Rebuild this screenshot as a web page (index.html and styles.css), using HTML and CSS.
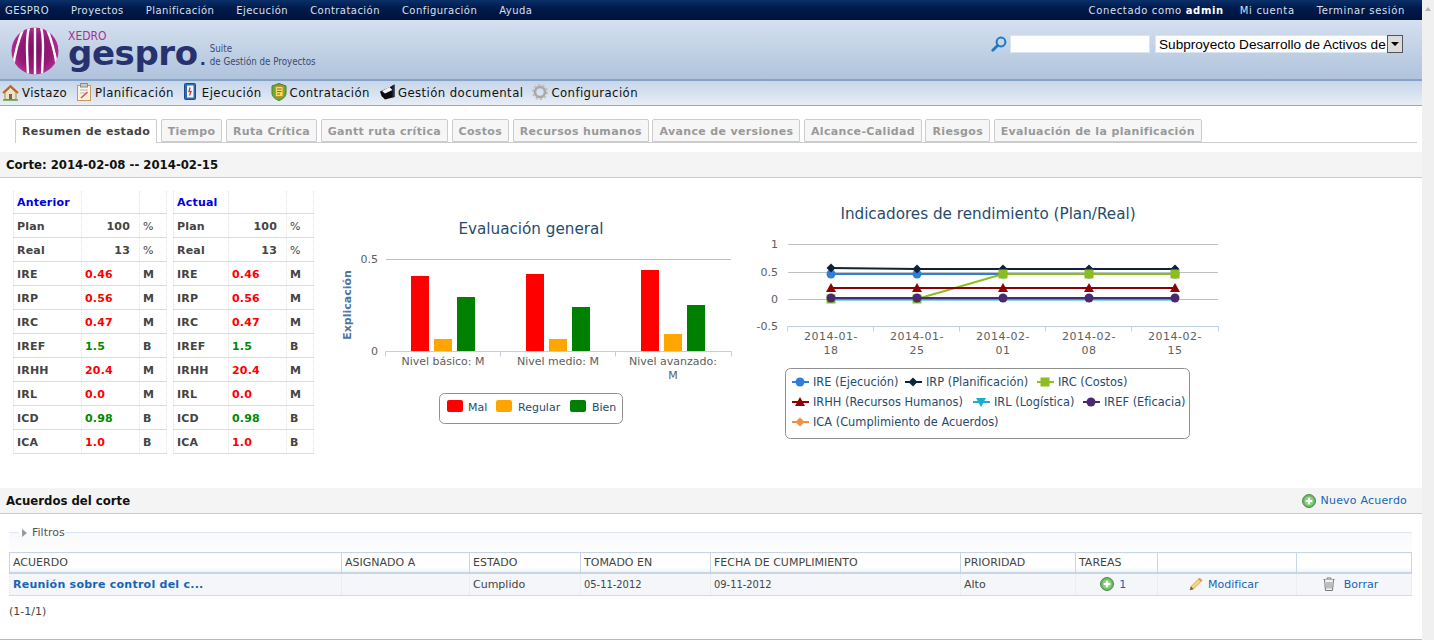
FILE: index.html
```html
<!DOCTYPE html>
<html lang="es">
<head>
    <meta charset="UTF-8">
    <meta name="viewport" content="width=device-width, initial-scale=1.0">
    <title>Gespro - Resumen de estado</title>
    <link rel="stylesheet" href="styles.css">
</head>
<body>
    <svg class="defs" width="0" height="0">
        <defs>
            <g id="ico-add">
                <circle cx="7" cy="7" r="6.5" fill="#6cb563" stroke="#4c9146"/>
                <circle cx="7" cy="7" r="4.6" fill="#8fd086"/>
                <path d="M7 3.8v6.4M3.8 7h6.4" stroke="#fff" stroke-width="2.2"/>
            </g>
            <g id="m-circle"><circle r="4.5" fill="#2f7ed8"/></g>
            <g id="m-diamond"><path d="M0 -4.5L4.5 0L0 4.5L-4.5 0Z" fill="#0d233a"/></g>
            <g id="m-square"><rect x="-4.5" y="-4.5" width="9" height="9" fill="#8bbc21"/></g>
            <g id="m-triangle"><path d="M0 -5L5 4H-5Z" fill="#910000"/></g>
            <g id="m-triangle-down"><path d="M-5 -4H5L0 5Z" fill="#1aadce"/></g>
            <g id="m-circle-purple"><circle r="4.5" fill="#492970"/></g>
            <g id="m-diamond-orange"><path d="M0 -4.5L4.5 0L0 4.5L-4.5 0Z" fill="#f28f43"/></g>
        </defs>
    </svg>

    <div class="page">
        <div class="topbar">
            <ul class="topbar-menu">
                <li class="first">GESPRO</li>
                <li>Proyectos</li>
                <li>Planificación</li>
                <li>Ejecución</li>
                <li>Contratación</li>
                <li>Configuración</li>
                <li>Ayuda</li>
            </ul>
            <ul class="topbar-user">
                <li class="who">Conectado como <b>admin</b></li>
                <li>Mi cuenta</li>
                <li>Terminar sesión</li>
            </ul>
        </div>

        <div class="header">
            <div class="logo">
                <svg class="logo-mark" width="48" height="48" viewBox="0 0 48 48">
                    <defs>
                        <radialGradient id="logoFill" cx="0.5" cy="0.5" r="0.6">
                            <stop offset="0" stop-color="#7d0f63"/>
                            <stop offset="0.6" stop-color="#961a78"/>
                            <stop offset="1" stop-color="#c43aa0"/>
                        </radialGradient>
                        <clipPath id="logoClip"><circle cx="24" cy="24" r="23.5"/></clipPath>
                    </defs>
                    <circle cx="24" cy="24" r="23.5" fill="url(#logoFill)"/>
                    <g clip-path="url(#logoClip)" fill="none" stroke="#fff" stroke-width="2.4">
                        <path d="M24 0V48"/>
                        <path d="M18 0C15 12 16 26 17 48"/>
                        <path d="M30 0C33 12 32 26 31 48"/>
                        <path d="M12 2C7 14 4 26 2 40"/>
                        <path d="M36 2C41 14 44 26 46 40"/>
                    </g>
                </svg>
                <div class="logo-name">
                    <span class="logo-xedro">XEDRO</span>
                    <span class="logo-gespro">gespro<i>.</i></span>
                </div>
                <div class="logo-suite">Suite<br>de Gestión de Proyectos</div>
            </div>
            <div class="search">
                <svg width="16" height="16" viewBox="0 0 16 16">
                    <circle cx="10" cy="6" r="4.4" fill="none" stroke="#1d77c4" stroke-width="2"/>
                    <path d="M6.6 9.4L1.8 14.2" stroke="#1d77c4" stroke-width="2.8" stroke-linecap="round"/>
                </svg>
                <input class="search-box" type="text">
                <div class="project-select">
                    <select>
                        <option>Subproyecto Desarrollo de Activos de Información</option>
                    </select>
                    <span class="select-btn"></span>
                </div>
            </div>
        </div>

        <div class="nav">
            <a class="nav-item">
                <svg width="17" height="17" viewBox="0 0 17 17">
                    <path d="M3 8.5V15.5H14V8.5L8.5 3.5Z" fill="#f1e3c0" stroke="#a98a55"/>
                    <path d="M1 9L8.5 2L16 9" fill="none" stroke="#b8662a" stroke-width="2"/>
                    <rect x="7" y="10" width="3" height="5.5" fill="#6d6a5c"/>
                    <path d="M1 16H16" stroke="#58a04a" stroke-width="1.5"/>
                </svg>
                Vistazo
            </a>
            <a class="nav-item">
                <svg width="16" height="18" viewBox="0 0 16 18">
                    <rect x="1.5" y="2.5" width="13" height="15" fill="#fbf3df" stroke="#c69a5c"/>
                    <rect x="4.5" y="0.5" width="7" height="3.5" fill="#c9c9c9" stroke="#8c8c8c"/>
                    <path d="M4 7H12M4 10H9" stroke="#b9b9b9"/>
                    <path d="M5 15L11.5 9" stroke="#d9534a" stroke-width="1.6"/>
                </svg>
                Planificación
            </a>
            <a class="nav-item">
                <svg width="16" height="18" viewBox="0 0 16 18">
                    <rect x="1.5" y="0.5" width="11" height="16" rx="1" fill="#2d6db5" stroke="#1c4b86"/>
                    <rect x="4" y="2.5" width="6.5" height="12" fill="#f2f6fb"/>
                    <path d="M7 4.5L6 8.5H8L6.5 12.5" fill="none" stroke="#c43a3a" stroke-width="1.3"/>
                </svg>
                Ejecución
            </a>
            <a class="nav-item">
                <svg width="16" height="18" viewBox="0 0 16 18">
                    <path d="M1 3L8 0.5L15 3V10C15 14 11 16.5 8 17.5C5 16.5 1 14 1 10Z" fill="#71a83c" stroke="#4d7d27"/>
                    <rect x="4.5" y="3.5" width="7.5" height="10" fill="#f6dd5e" stroke="#b29a2d"/>
                    <path d="M6 6H10.5M6 8.5H10.5M6 11H9" stroke="#a05c2c"/>
                </svg>
                Contratación
            </a>
            <a class="nav-item">
                <svg width="16" height="16" viewBox="0 0 16 16">
                    <path d="M1 7.5L11 3L15.5 0.5V13L6 15.5L2.5 12Z" fill="#0c0c10"/>
                    <path d="M3 7L10.5 3L13.5 6L6 9.5Z" fill="#eef2f6"/>
                    <path d="M13.5 1.5L15.5 0.5V13L13.5 13.5Z" fill="#24304a"/>
                </svg>
                Gestión documental
            </a>
            <a class="nav-item">
                <svg width="16" height="16" viewBox="0 0 16 16">
                    <circle cx="8" cy="8" r="5" fill="none" stroke="#a9a9a9" stroke-width="2.6"/>
                    <circle cx="8" cy="8" r="7" fill="none" stroke="#bdbdbd" stroke-width="2" stroke-dasharray="2.2 2.2"/>
                </svg>
                Configuración
            </a>
        </div>

        <ul class="tabs">
            <li class="tab active">Resumen de estado</li>
            <li class="tab">Tiempo</li>
            <li class="tab">Ruta Crítica</li>
            <li class="tab">Gantt ruta crítica</li>
            <li class="tab">Costos</li>
            <li class="tab">Recursos humanos</li>
            <li class="tab">Avance de versiones</li>
            <li class="tab">Alcance-Calidad</li>
            <li class="tab">Riesgos</li>
            <li class="tab">Evaluación de la planificación</li>
        </ul>

        <div class="section-bar corte">Corte: 2014-02-08 -- 2014-02-15</div>

        <div class="summary">
            <table class="ind ind-prev">
                <tr class="head"><th><a>Anterior</a></th><td></td><td></td></tr>
                <tr><th>Plan</th><td class="num">100</td><td class="unit">%</td></tr>
                <tr><th>Real</th><td class="num">13</td><td class="unit">%</td></tr>
                <tr><th>IRE</th><td class="bad">0.46</td><td>M</td></tr>
                <tr><th>IRP</th><td class="bad">0.56</td><td>M</td></tr>
                <tr><th>IRC</th><td class="bad">0.47</td><td>M</td></tr>
                <tr><th>IREF</th><td class="good">1.5</td><td>B</td></tr>
                <tr><th>IRHH</th><td class="bad">20.4</td><td>M</td></tr>
                <tr><th>IRL</th><td class="bad">0.0</td><td>M</td></tr>
                <tr><th>ICD</th><td class="good">0.98</td><td>B</td></tr>
                <tr><th>ICA</th><td class="bad">1.0</td><td>B</td></tr>
            </table>
            <table class="ind ind-now">
                <tr class="head"><th><a>Actual</a></th><td></td><td></td></tr>
                <tr><th>Plan</th><td class="num">100</td><td class="unit">%</td></tr>
                <tr><th>Real</th><td class="num">13</td><td class="unit">%</td></tr>
                <tr><th>IRE</th><td class="bad">0.46</td><td>M</td></tr>
                <tr><th>IRP</th><td class="bad">0.56</td><td>M</td></tr>
                <tr><th>IRC</th><td class="bad">0.47</td><td>M</td></tr>
                <tr><th>IREF</th><td class="good">1.5</td><td>B</td></tr>
                <tr><th>IRHH</th><td class="bad">20.4</td><td>M</td></tr>
                <tr><th>IRL</th><td class="bad">0.0</td><td>M</td></tr>
                <tr><th>ICD</th><td class="good">0.98</td><td>B</td></tr>
                <tr><th>ICA</th><td class="bad">1.0</td><td>B</td></tr>
            </table>

            <!-- viewBox keeps page coordinates, easier to check against the screenshot -->
            <svg class="chart chart-bars" width="420" height="260" viewBox="330 191 420 260">
                <text class="c-title" x="531" y="234" text-anchor="middle">Evaluación general</text>
                <text class="c-axis-title" transform="translate(351 305) rotate(-90)" text-anchor="middle">Explicación</text>
                <text class="c-label" x="378" y="263" text-anchor="end">0.5</text>
                <text class="c-label" x="378" y="355" text-anchor="end">0</text>
                <path class="c-grid" d="M386 259.5H731"/>
                <path class="c-axis" d="M385.5 351.5H731.5M385.5 351.5v5M500.5 351.5v5M615.5 351.5v5M731.5 351.5v5"/>

                <rect x="411" y="276" width="18" height="75" fill="#f00"/>
                <rect x="434" y="339" width="18" height="12" fill="#ffa500"/>
                <rect x="457" y="297" width="18" height="54" fill="#008000"/>
                <rect x="526" y="274" width="18" height="77" fill="#f00"/>
                <rect x="549" y="339" width="18" height="12" fill="#ffa500"/>
                <rect x="572" y="307" width="18" height="44" fill="#008000"/>
                <rect x="641" y="270" width="18" height="81" fill="#f00"/>
                <rect x="664" y="334" width="18" height="17" fill="#ffa500"/>
                <rect x="687" y="305" width="18" height="46" fill="#008000"/>

                <text class="c-label" x="443" y="365" text-anchor="middle">Nivel básico: M</text>
                <text class="c-label" x="558" y="365" text-anchor="middle">Nivel medio: M</text>
                <text class="c-label" x="673" y="365" text-anchor="middle">Nivel avanzado:</text>
                <text class="c-label" x="673" y="379" text-anchor="middle">M</text>

                <rect class="c-legend" x="439.5" y="393.5" width="183" height="30" rx="5"/>
                <rect x="447" y="400" width="16" height="12" rx="2" fill="#f00"/>
                <text class="c-legend-text" x="468" y="411">Mal</text>
                <rect x="496" y="400" width="16" height="12" rx="2" fill="#ffa500"/>
                <text class="c-legend-text" x="518" y="411">Regular</text>
                <rect x="570" y="400" width="16" height="12" rx="2" fill="#008000"/>
                <text class="c-legend-text" x="592" y="411">Bien</text>
            </svg>

            <svg class="chart chart-lines" width="490" height="260" viewBox="750 191 490 260">
                <text class="c-title" x="988" y="219" text-anchor="middle">Indicadores de rendimiento (Plan/Real)</text>
                <text class="c-label" x="778" y="248" text-anchor="end">1</text>
                <text class="c-label" x="778" y="276" text-anchor="end">0.5</text>
                <text class="c-label" x="778" y="303" text-anchor="end">0</text>
                <text class="c-label" x="778" y="330" text-anchor="end">-0.5</text>
                <path class="c-grid" d="M788 244.5H1218M788 272.5H1218M788 299.5H1218"/>
                <path class="c-axis" d="M787.5 326.5H1218.5M787.5 326.5v5M873.5 326.5v5M959.5 326.5v5M1045.5 326.5v5M1131.5 326.5v5M1218.5 326.5v5"/>

                <path class="c-line" stroke="#2f7ed8" d="M831 274H1175"/>
                <use href="#m-circle" x="831" y="274"/><use href="#m-circle" x="917" y="274"/><use href="#m-circle" x="1003" y="274"/><use href="#m-circle" x="1089" y="274"/><use href="#m-circle" x="1175" y="274"/>

                <path class="c-line" stroke="#0d233a" d="M831 268L917 269H1175"/>
                <use href="#m-diamond" x="831" y="268"/><use href="#m-diamond" x="917" y="269"/><use href="#m-diamond" x="1003" y="269"/><use href="#m-diamond" x="1089" y="269"/><use href="#m-diamond" x="1175" y="269"/>

                <path class="c-line" stroke="#8bbc21" d="M831 299H917L1003 274H1175"/>
                <use href="#m-square" x="831" y="299"/><use href="#m-square" x="917" y="299"/><use href="#m-square" x="1003" y="274"/><use href="#m-square" x="1089" y="274"/><use href="#m-square" x="1175" y="274"/>

                <path class="c-line" stroke="#910000" d="M831 288H1175"/>
                <use href="#m-triangle" x="831" y="288"/><use href="#m-triangle" x="917" y="288"/><use href="#m-triangle" x="1003" y="288"/><use href="#m-triangle" x="1089" y="288"/><use href="#m-triangle" x="1175" y="288"/>

                <path class="c-line" stroke="#1aadce" d="M831 299.5H1175"/>

                <path class="c-line" stroke="#492970" d="M831 298H1175"/>
                <use href="#m-circle-purple" x="831" y="298"/><use href="#m-circle-purple" x="917" y="298"/><use href="#m-circle-purple" x="1003" y="298"/><use href="#m-circle-purple" x="1089" y="298"/><use href="#m-circle-purple" x="1175" y="298"/>

                <text class="c-label c-date" x="831" y="340" text-anchor="middle">2014-01-</text>
                <text class="c-label c-date" x="831" y="354" text-anchor="middle">18</text>
                <text class="c-label c-date" x="917" y="340" text-anchor="middle">2014-01-</text>
                <text class="c-label c-date" x="917" y="354" text-anchor="middle">25</text>
                <text class="c-label c-date" x="1003" y="340" text-anchor="middle">2014-02-</text>
                <text class="c-label c-date" x="1003" y="354" text-anchor="middle">01</text>
                <text class="c-label c-date" x="1089" y="340" text-anchor="middle">2014-02-</text>
                <text class="c-label c-date" x="1089" y="354" text-anchor="middle">08</text>
                <text class="c-label c-date" x="1175" y="340" text-anchor="middle">2014-02-</text>
                <text class="c-label c-date" x="1175" y="354" text-anchor="middle">15</text>

                <rect class="c-legend" x="785.5" y="368.5" width="404" height="70" rx="5"/>
                <path class="c-line" stroke="#2f7ed8" d="M792 382H809"/><use href="#m-circle" x="800" y="382"/>
                <text class="c-legend-text wide" x="813" y="386">IRE (Ejecución)</text>
                <path class="c-line" stroke="#0d233a" d="M905 382H922"/><use href="#m-diamond" x="913" y="382"/>
                <text class="c-legend-text wide" x="926" y="386">IRP (Planificación)</text>
                <path class="c-line" stroke="#8bbc21" d="M1037 382H1054"/><use href="#m-square" x="1045" y="382"/>
                <text class="c-legend-text wide" x="1058" y="386">IRC (Costos)</text>
                <path class="c-line" stroke="#910000" d="M792 402H809"/><use href="#m-triangle" x="800" y="402"/>
                <text class="c-legend-text wide" x="813" y="406">IRHH (Recursos Humanos)</text>
                <path class="c-line" stroke="#1aadce" d="M973 402H990"/><use href="#m-triangle-down" x="981" y="402"/>
                <text class="c-legend-text wide" x="994" y="406">IRL (Logística)</text>
                <path class="c-line" stroke="#492970" d="M1083 402H1100"/><use href="#m-circle-purple" x="1091" y="402"/>
                <text class="c-legend-text wide" x="1104" y="406">IREF (Eficacia)</text>
                <path class="c-line" stroke="#f28f43" d="M792 422H809"/><use href="#m-diamond-orange" x="800" y="422"/>
                <text class="c-legend-text wide" x="813" y="426">ICA (Cumplimiento de Acuerdos)</text>
            </svg>
        </div>

        <div class="section-bar acuerdos">
            <span>Acuerdos del corte</span>
            <a class="new-link">
                <svg width="14" height="14" viewBox="0 0 14 14"><use href="#ico-add"/></svg>
                Nuevo Acuerdo
            </a>
        </div>

        <fieldset class="filters">
            <legend><span class="arrow"></span>Filtros</legend>
        </fieldset>

        <table class="grid">
            <colgroup>
                <col class="c1"><col class="c2"><col class="c3"><col class="c4"><col class="c5">
                <col class="c6"><col class="c7"><col class="c8"><col class="c9">
            </colgroup>
            <thead>
                <tr>
                    <th>ACUERDO</th><th>ASIGNADO A</th><th>ESTADO</th><th>TOMADO EN</th>
                    <th>FECHA DE CUMPLIMIENTO</th><th>PRIORIDAD</th><th>TAREAS</th><th></th><th></th>
                </tr>
            </thead>
            <tbody>
                <tr>
                    <td><a class="title-link">Reunión sobre control del c...</a></td>
                    <td></td>
                    <td>Cumplido</td>
                    <td class="date">05-11-2012</td>
                    <td class="date">09-11-2012</td>
                    <td>Alto</td>
                    <td class="center">
                        <a>
                            <svg width="14" height="14" viewBox="0 0 14 14"><use href="#ico-add"/></svg>
                            1
                        </a>
                    </td>
                    <td class="center">
                        <a>
                            <svg width="14" height="14" viewBox="0 0 14 14">
                                <path d="M1 13L2 9.5L10.5 1L13 3.5L4.5 12Z" fill="#f4d77a" stroke="#c7a64a" stroke-width="0.8"/>
                                <path d="M10.5 1L13 3.5L11.8 4.7L9.3 2.2Z" fill="#e8837f"/>
                                <path d="M1 13L2 9.5L4.5 12Z" fill="#6b5a3a"/>
                            </svg>
                            Modificar
                        </a>
                    </td>
                    <td class="center">
                        <a>
                            <svg width="12" height="14" viewBox="0 0 12 14">
                                <path d="M0.5 2.5H11.5M4 2.5V1H8V2.5" fill="none" stroke="#777"/>
                                <path d="M1.5 2.5L2.5 13.5H9.5L10.5 2.5" fill="#f3f3f3" stroke="#777"/>
                                <path d="M4 5V11.5M6 5V11.5M8 5V11.5" stroke="#888"/>
                            </svg>
                            &nbsp;Borrar
                        </a>
                    </td>
                </tr>
            </tbody>
        </table>

        <p class="pager">(1-1/1)</p>
        <div class="page-end"></div>
    </div>

    <div class="scroll-track"><span class="scroll-up"></span></div>
</body>
</html>
```

FILE: styles.css
```css
html, body {
    margin: 0;
    height: 640px;
    overflow: hidden;
}
body {
    display: flex;
    font-family: "DejaVu Sans", Verdana, sans-serif;
    font-size: 11px;
    color: #444;
    background-color: #fff;
}
.defs {
    position: absolute;
}
.page {
    width: 1422px;
    flex: none;
}
.scroll-track {
    flex: 1;
    background-color: #f0f0f0;
    display: flex;
    justify-content: center;
    padding-top: 7px;
}
.scroll-up {
    width: 0;
    height: 0;
    border-left: 3px solid transparent;
    border-right: 3px solid transparent;
    border-bottom: 4px solid #b5b5b5;
}
ul {
    list-style: none;
    margin: 0;
    padding: 0;
}

/* top bar */
.topbar {
    height: 20px;
    box-sizing: border-box;
    display: flex;
    justify-content: space-between;
    align-items: center;
    padding: 1px 17px 0 5px;
    background: linear-gradient(#0a3069, #001a4c 40%, #00123c);
    color: #d8e0ec;
    font-size: 10px;
    letter-spacing: 0.45px;
}
.topbar-menu, .topbar-user {
    display: flex;
    gap: 22px;
}
.topbar-user {
    letter-spacing: 0.65px;
}
.topbar-user .who {
    margin-right: -6px;
}
.topbar-user b {
    color: #fff;
}

/* header */
.header {
    height: 61px;
    box-sizing: border-box;
    display: flex;
    justify-content: space-between;
    border-bottom: 2px solid #86a3c6;
    background: linear-gradient(#d5e0ef, #afc3dc);
}
.logo {
    display: flex;
    align-items: flex-start;
    padding: 7px 0 0 11px;
}
.logo-name {
    display: flex;
    flex-direction: column;
    margin-left: 9px;
}
.logo-xedro {
    font-family: "DejaVu Sans Condensed", "Noto Sans", sans-serif;
    font-size: 12px;
    line-height: 12px;
    margin-top: 3px;
    color: #a8308f;
}
.logo-gespro {
    font-weight: bold;
    font-size: 34px;
    line-height: 24px;
    margin-top: -1px;
    letter-spacing: -0.4px;
    color: #28316f;
}
.logo-gespro i {
    font-style: normal;
    font-size: 16px;
    letter-spacing: 0;
    margin-left: 2px;
}
.logo-suite {
    font-family: "DejaVu Sans Condensed", "Noto Sans", sans-serif;
    font-size: 9.7px;
    line-height: 13px;
    margin: 15px 0 0 4px;
    color: #3b4a70;
}
.search {
    display: flex;
    align-items: flex-start;
    gap: 3px;
    padding: 15px 19px 0 0;
}
.search svg {
    margin-top: 1px;
}
.search-box {
    width: 140px;
    height: 18px;
    box-sizing: border-box;
    border: 1px solid #dbe4ef;
    padding: 0;
    background-color: #fff;
}
.project-select {
    position: relative;
    margin-left: 2px;
}
.project-select select {
    display: block;
    width: 248px;
    height: 18px;
    box-sizing: border-box;
    appearance: none;
    border: 1px solid #dbe4ef;
    border-radius: 0;
    padding: 0 16px 0 3px;
    background-color: #fff;
    color: #000;
    font-family: "Liberation Sans", Arial, sans-serif;
    font-size: 13.6px;
}
.select-btn {
    position: absolute;
    top: 0;
    right: 0;
    width: 16px;
    height: 18px;
    box-sizing: border-box;
    border: 1px solid #555;
    background-color: #dcdcdc;
}
.select-btn::after {
    content: "";
    position: absolute;
    left: 3px;
    top: 6px;
    border-left: 4px solid transparent;
    border-right: 4px solid transparent;
    border-top: 4px solid #000;
}

/* main menu */
.nav {
    height: 25px;
    box-sizing: border-box;
    display: flex;
    align-items: center;
    gap: 9px;
    padding: 0 0 2px 2px;
    border-bottom: 1px solid #9aa8b8;
    background: linear-gradient(#c6d6ea, #e8edf5);
    font-family: "DejaVu Sans Condensed", "Noto Sans", sans-serif;
    font-size: 13px;
    letter-spacing: 0.42px;
    color: #111;
}
.nav-item {
    display: flex;
    align-items: center;
    gap: 3px;
}

/* tabs */
.tabs {
    display: flex;
    gap: 3.5px;
    height: 24px;
    box-sizing: border-box;
    margin: 13px 5px 0 15px;
    border-bottom: 1px solid #ccc;
}
.tab {
    height: 23px;
    box-sizing: border-box;
    padding: 0 6px;
    border: 1px solid #ccc;
    border-radius: 2px 2px 0 0;
    background-color: #f6f6f6;
    color: #999;
    font-weight: bold;
    letter-spacing: 0.35px;
    line-height: 23px;
}
.tab.active {
    height: 24px;
    border-bottom: 0;
    background-color: #fff;
    color: #444;
}

/* section bars */
.section-bar {
    height: 26px;
    box-sizing: border-box;
    display: flex;
    justify-content: space-between;
    align-items: center;
    padding: 0 15px 0 6px;
    border-bottom: 1px solid #ccc;
    background-color: #f4f4f4;
    color: #111;
    font-family: "DejaVu Sans Condensed", "Noto Sans", sans-serif;
    font-size: 13px;
    font-weight: bold;
}
.corte {
    margin-top: 9px;
}
.new-link {
    display: flex;
    align-items: center;
    gap: 5px;
    color: #1565b8;
    font-family: "DejaVu Sans", Verdana, sans-serif;
    font-size: 11px;
    font-weight: normal;
    letter-spacing: 0.2px;
}

/* indicator tables */
.summary {
    display: flex;
    height: 310px;
    box-sizing: border-box;
    padding: 13px 0 0 13px;
}
.ind {
    border-collapse: collapse;
    table-layout: fixed;
    height: 262px;
    margin-right: 6px;
    flex: none;
    letter-spacing: 0.2px;
}
.ind-prev {
    width: 154px;
}
.ind-now {
    width: 141px;
}
.ind th, .ind td {
    padding: 2px 3px 0;
    height: 24px;
    box-sizing: border-box;
    border-bottom: 1px solid #ddd;
    border-left: 1px dotted #e4e4e4;
    border-right: 1px dotted #e4e4e4;
    font-weight: bold;
    text-align: left;
}
.ind .head th, .ind .head td {
    height: 22px;
}
.ind-prev th {
    width: 68px;
}
.ind-prev td:last-child, .ind-now td:last-child {
    width: 27px;
}
.ind-now th {
    width: 55px;
}
.ind a {
    color: #00d;
}
.ind .num {
    text-align: right;
    padding-right: 9px;
}
.ind .unit {
    font-weight: normal;
}
.ind .bad {
    color: #f00;
}
.ind .good {
    color: #080;
}

/* charts */
.chart {
    display: block;
    flex: none;
    font-family: "DejaVu Sans", Verdana, sans-serif;
}
.chart-bars {
    margin-left: 10px;
}
.c-title {
    font-size: 15.2px;
    fill: #274b6d;
}
.c-axis-title {
    font-size: 11px;
    font-weight: bold;
    fill: #4d759e;
}
.c-label {
    font-size: 11px;
    fill: #606060;
}
.c-date {
    letter-spacing: 0.5px;
}
.c-grid {
    fill: none;
    stroke: #c0c0c0;
}
.c-axis {
    fill: none;
    stroke: #c0d0e0;
}
.c-line {
    fill: none;
    stroke-width: 2;
}
.c-legend {
    fill: #fff;
    stroke: #909090;
}
.c-legend-text {
    font-size: 11px;
    fill: #274b6d;
}
.c-legend-text.wide {
    font-size: 11.4px;
}

/* filters */
.filters {
    height: 26px;
    box-sizing: border-box;
    margin: 12px 10px 0 9px;
    padding: 0;
    border: 0;
    border-top: 1px solid #dde6f1;
    background: linear-gradient(#f8f9fb, #fdfdfd);
}
.filters legend {
    margin-left: 10px;
    padding: 0;
    display: flex;
    align-items: center;
    gap: 5px;
    color: #555;
}
.arrow {
    width: 0;
    height: 0;
    margin-left: 3px;
    border-top: 4px solid transparent;
    border-bottom: 4px solid transparent;
    border-left: 5px solid #999;
}

/* agreements table */
.grid {
    width: 1402px;
    margin-left: 9px;
    border-collapse: collapse;
    table-layout: fixed;
}
.grid .c1 { width: 332px; }
.grid .c2 { width: 128px; }
.grid .c3 { width: 111px; }
.grid .c4 { width: 130px; }
.grid .c5 { width: 250px; }
.grid .c6 { width: 115px; }
.grid .c7 { width: 82px; }
.grid .c8 { width: 139px; }
.grid .c9 { width: 115px; }
.grid th {
    height: 20px;
    box-sizing: border-box;
    padding: 0 3px;
    border: 1px solid #c8d5e4;
    border-bottom-width: 2px;
    background: linear-gradient(#fff 70%, #eef2f7);
    color: #444;
    font-weight: normal;
    text-align: left;
}
.grid td {
    height: 23px;
    box-sizing: border-box;
    padding: 0 3px;
    border-bottom: 1px solid #d5dbe2;
    border-left: 1px dotted #e2e5e9;
    border-right: 1px dotted #e2e5e9;
    background-color: #f4f6f9;
    color: #444;
}
.grid .date {
    font-family: "DejaVu Sans Condensed", "Noto Sans", sans-serif;
}
.grid a {
    color: #1565b8;
}
.grid .center {
    text-align: center;
    padding-right: 10px;
}
.grid svg {
    vertical-align: -3px;
    margin-right: 2px;
}
.title-link {
    font-weight: bold;
    letter-spacing: 0.25px;
}
.pager {
    margin: 8px 0 0 9px;
    line-height: 16px;
}
.page-end {
    margin-top: 19px;
    border-top: 1px solid #bbb;
}
```
